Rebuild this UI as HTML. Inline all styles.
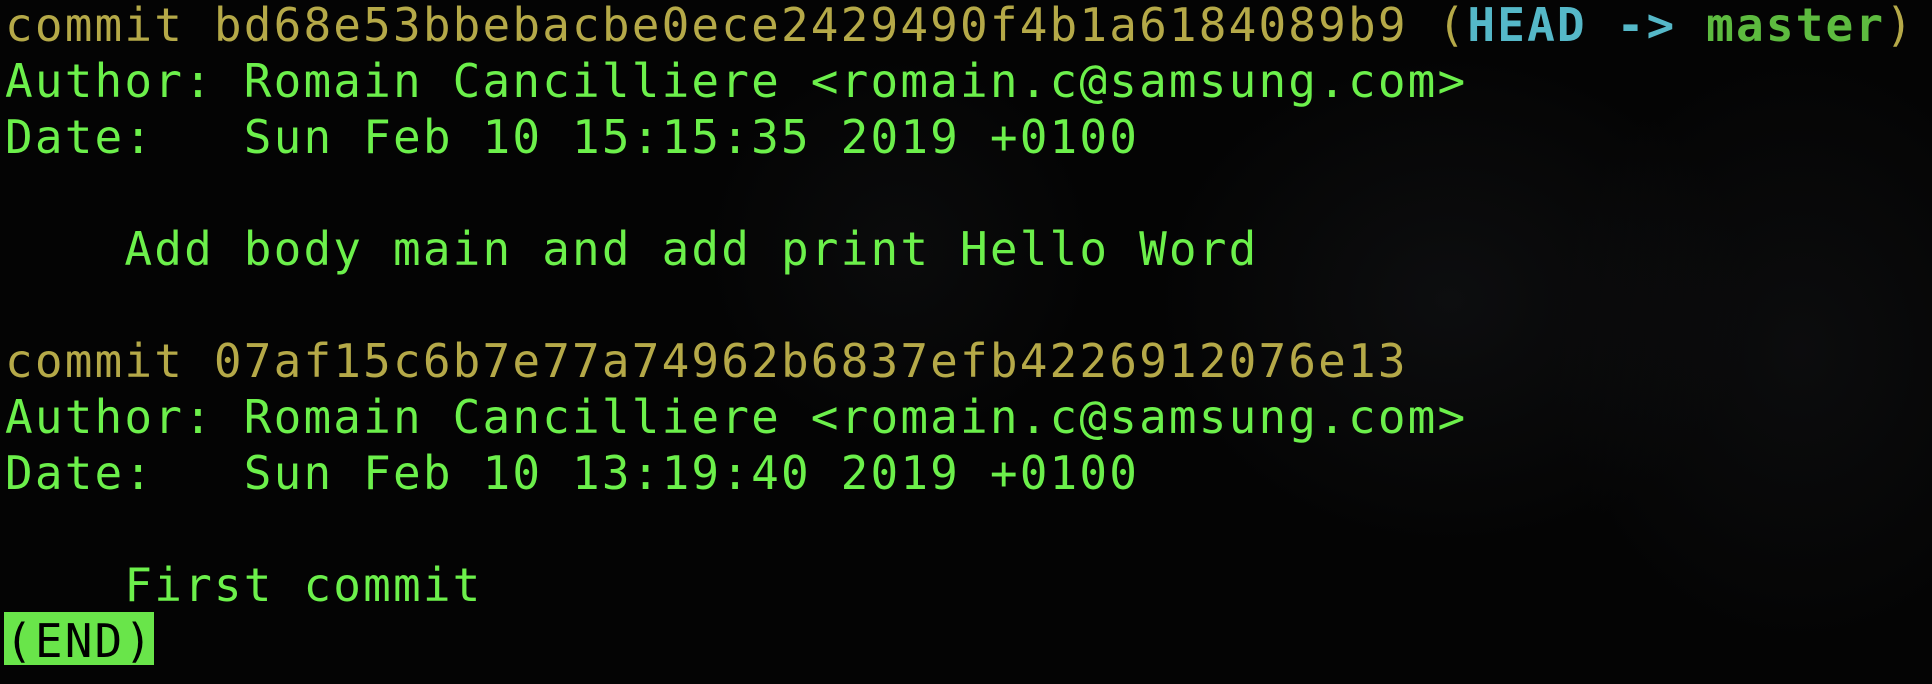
<!DOCTYPE html>
<html><head><meta charset="utf-8"><style>
html,body{margin:0;padding:0;width:1932px;height:684px;overflow:hidden;background:#040404;}
.bg{position:absolute;inset:0;background:
radial-gradient(ellipse 300px 250px at 1450px 300px,rgba(30,32,36,.35),transparent),
radial-gradient(ellipse 250px 300px at 1800px 350px,rgba(30,32,36,.3),transparent),
radial-gradient(ellipse 200px 200px at 900px 250px,rgba(25,27,30,.3),transparent);}
pre{position:absolute;left:5px;top:-3px;margin:0;font-family:"DejaVu Sans Mono",monospace;font-size:46px;letter-spacing:2.15px;line-height:56px;color:#6cf04b;}
.y{color:#b5a948}.c{color:#55b8c8;font-weight:bold}.m{color:#5dbb3f;font-weight:bold}
.end{position:absolute;left:4px;top:612px;width:150px;height:53px;background:#69e54a;}
.endt{color:#000;}
</style></head><body><div class="bg"></div><div class="end"></div>
<pre><span class="y">commit bd68e53bbebacbe0ece2429490f4b1a6184089b9 (</span><span class="c">HEAD -&gt; </span><span class="m">master</span><span class="y">)</span>
Author: Romain Cancilliere &lt;romain.c@samsung.com&gt;
Date:   Sun Feb 10 15:15:35 2019 +0100

    Add body main and add print Hello Word

<span class="y">commit 07af15c6b7e77a74962b6837efb4226912076e13</span>
Author: Romain Cancilliere &lt;romain.c@samsung.com&gt;
Date:   Sun Feb 10 13:19:40 2019 +0100

    First commit
<span class="endt">(END)</span></pre>
</body></html>
